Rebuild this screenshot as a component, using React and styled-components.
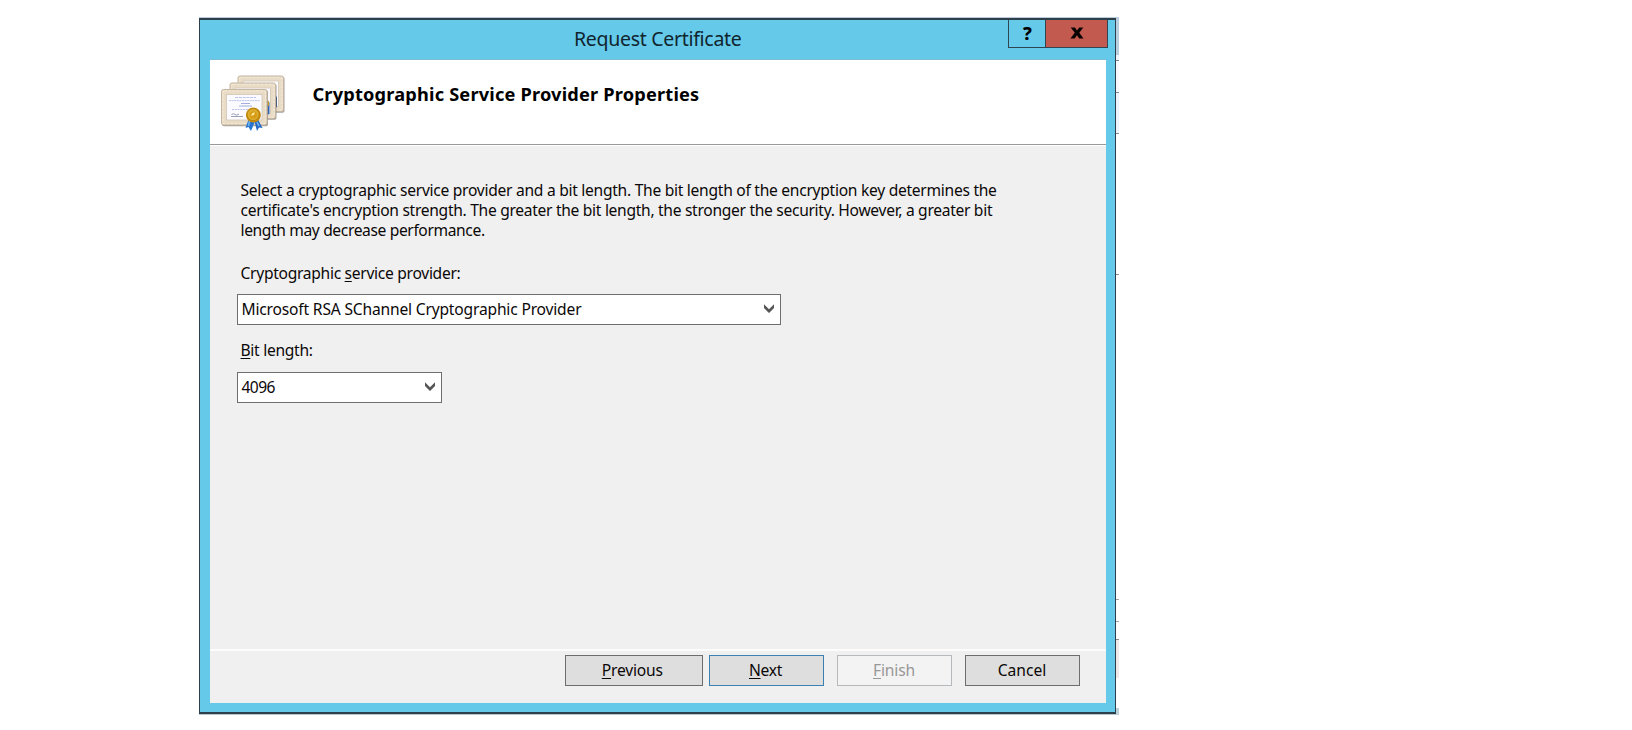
import React from "react";
import styled, { createGlobalStyle } from "styled-components";

const GlobalStyle = createGlobalStyle`
  * { box-sizing: border-box; }
  body { margin: 0; background: #fff; overflow: hidden; }
  button { font: inherit; }
`;

const Page = styled.main`
  display: flex;
  align-items: flex-start;
  height: 730px;
  padding: 18px 0 0 199px;
  background: #fff;
  font-family: "Noto Sans", "Open Sans", sans-serif;
  font-size: 15.6px;
  line-height: 20.3px;
  color: #0b0808;
`;

const Dialog = styled.section`
  display: flex;
  flex-direction: column;
  width: 917px;
  height: 696px;
  border: 1px solid #2d3f4a;
  border-top-width: 2px;
  border-bottom-width: 2px;
  background: #65caea;
  padding: 0 10px 9px 9.5px;
  box-shadow: 0 -1px 0 #b9cbdc, 0 1px 0 #b7c5cc;
`;

const TitleBar = styled.header`
  display: grid;
  grid-template-columns: 1fr auto 1fr;
  height: 39px;
  flex: none;
`;

const Title = styled.h1`
  grid-column: 2;
  margin: 0;
  padding: 2px 0 0 1px;
  font-size: 19.5px;
  font-weight: 400;
  line-height: 34px;
  letter-spacing: -0.3px;
  color: #10242d;
`;

const WindowControls = styled.div`
  grid-column: 3;
  justify-self: end;
  display: flex;
  height: 28px;
  margin-right: -3px;
`;

const ControlButton = styled.button`
  display: flex;
  align-items: center;
  justify-content: center;
  width: ${(p) => p.$width}px;
  margin-left: -1px;
  padding: 0 0 1px 1px;
  border: 1px solid #2f4652;
  border-top: 0;
  background: ${(p) => p.$fill};
  color: #000;
  font-size: 18px;
  font-weight: 800;
  line-height: 27px;
`;

const Client = styled.div`
  display: flex;
  flex-direction: column;
  flex: 1;
  background: #f0f0f0;
  margin-right: -1px;
`;

const Banner = styled.div`
  display: flex;
  height: 86px;
  padding: 14px 0 0 11px;
  gap: 27px;
  background: #fff;
  border-top: 1px solid #7cbdd6;
  border-bottom: 1px solid #999;
  box-shadow: 0 1px 0 #fff;
`;

const Heading = styled.h2`
  margin: 8px 0 0;
  font-size: 18.2px;
  font-weight: 700;
  line-height: 24px;
  letter-spacing: 0.19px;
  color: #000;
`;

const Form = styled.div`
  flex: 1;
  display: flex;
  flex-direction: column;
  align-items: flex-start;
  padding: 34.9px 0 0 27px;
`;

const Description = styled.p`
  margin: 0 0 22.6px 4px;
  line-height: 20.1px;
`;

const Line = styled.span`
  display: block;
  white-space: nowrap;
  letter-spacing: ${(p) => p.$tracking}px;
`;

const Label = styled.label`
  margin: ${(p) => p.$top || 0}px 0 0 4px;
  letter-spacing: -0.29px;
`;

const Key = styled.span`
  text-decoration: underline;
  text-decoration-thickness: 1px;
  text-underline-offset: 2px;
  text-decoration-skip-ink: none;
`;

const Select = styled.div`
  display: flex;
  align-items: center;
  justify-content: space-between;
  width: ${(p) => p.$width}px;
  height: 31px;
  margin-top: ${(p) => p.$top}px;
  padding: 0 5px 0 4px;
  border: 1px solid #6f6f6f;
  background: #fff;
  letter-spacing: ${(p) => p.$tracking}px;
`;

const Footer = styled.footer`
  display: flex;
  height: 54px;
  padding: 4px 26px 0 0;
  justify-content: flex-end;
  align-items: flex-start;
  border-top: 2px solid #fcfcfc;
`;

const Button = styled.button`
  width: ${(p) => p.$width}px;
  height: 31px;
  margin-left: ${(p) => p.$gap}px;
  padding: 0 ${(p) => p.$shift || 0}px 1px 0;
  border: 1px solid ${(p) => (p.disabled ? "#b5b9bc" : p.$primary ? "#3b80b3" : "#6d6d6d")};
  background: ${(p) => (p.disabled ? "#f3f3f3" : "#dedede")};
  color: ${(p) => (p.disabled ? "#989898" : "#0b0808")};
  letter-spacing: ${(p) => p.$tracking}px;
`;

/* Narrow strip of the window lying behind the dialog */
const BehindStrip = styled.div`
  display: flex;
  flex-direction: column;
  width: 3px;
  margin-top: -1px;
`;

const StripSegment = styled.div`
  height: ${(p) => p.$height}px;
  background: ${(p) => p.$fill || "#fff"};
  border-bottom: 1px solid ${(p) => p.$line || "#8d8d91"};
`;

const Chevron = () => (
  <svg width="12" height="12" viewBox="0 0 12 12" aria-hidden="true">
    <path d="M1 1.2 6 6.2 11 1.2V4.9L6 9.9 1 4.9Z" fill="#555" />
  </svg>
);

const CloseGlyph = () => (
  <svg width="14" height="12" viewBox="0 0 14 12" aria-hidden="true">
    <path d="M0.7 0.5H5L7 3.5 9.2.5H13.3L9.3 5.8 13.5 11.5H9.2L7 8.2 4.7 11.5H.4L4.8 5.8Z" fill="#080404" />
  </svg>
);

const Sheet = ({ x, y }) => (
  <g transform={`translate(${x} ${y})`}>
    <rect x="1" y="1.2" width="46" height="36" rx="2" fill="#756d63" opacity=".65" />
    <rect x=".5" y=".5" width="45.5" height="35.5" rx="2" fill="#e9dcc7" stroke="#c5b5a1" />
    <rect x="2" y="2" width="42.5" height="32.5" rx="1.5" fill="none" stroke="#f3e9d7" strokeWidth="1.2" strokeDasharray="2.5 1.5" />
    <rect x="5.5" y="5.5" width="35.5" height="25.5" fill="#fbfaff" stroke="#d2c5b4" strokeWidth=".8" />
  </g>
);

const CertificatesIcon = () => (
  <svg width="65" height="58" viewBox="0 0 65 58" aria-hidden="true">
    <Sheet x={16.5} y={1.5} />
    <path d="M54.5 24v10l1.5-1.5V22z" fill="#36548f" />
    <Sheet x={8.5} y={8.5} />
    <path d="M46.5 30v11l2-1.5V28z" fill="#2c62b1" />
    <path d="M46.5 27.5l1.5-1v5l-1.5 1z" fill="#c99a25" />
    <Sheet x={0} y={15} />
    <g stroke="#a9b7df" strokeWidth=".8">
      <path d="M14 23.5h21" strokeDasharray="3 .8" />
      <path d="M8 26.6h31" strokeDasharray="2 .6" />
      <path d="M20 29.5h9M18 32h13" stroke="#8c9cd6" />
      <path d="M11 35.5h18" strokeDasharray="2 .8" />
    </g>
    <path d="M10.5 40.5q2-1.5 3.5 0t4-.5M10 42.5h12" fill="none" stroke="#737b92" strokeWidth=".7" />
    <path d="M27.5 45.5 24.5 54l3-1 2.5 4 4-9.5z" fill="#2775d3" />
    <path d="M33.5 47.5 36 57l2-3.5 3.5.5-4.5-8.5z" fill="#2468c4" />
    <path d="M28.5 47 27.5 52M36 48l2 4" stroke="#75b9ef" strokeWidth="1.5" />
    <circle cx="32.4" cy="41" r="7.5" fill="#c68d0e" />
    <circle cx="32.1" cy="40.6" r="6" fill="#dcae2d" stroke="#b57b0a" strokeWidth=".8" />
    <circle cx="32.4" cy="40.9" r="3.6" fill="#d79b16" />
    <path d="M30.2 41.7q.5-3 3.8-3.1l-1.2 2.3z" fill="#fff0a6" />
  </svg>
);

export default function App() {
  return (
    <>
      <GlobalStyle />
      <Page>
        <Dialog>
          <TitleBar>
            <Title>Request Certificate</Title>
            <WindowControls>
              <ControlButton $width={38} $fill="#65caea">?</ControlButton>
              <ControlButton $width={63} $fill="#c35a50" aria-label="Close">
                <CloseGlyph />
              </ControlButton>
            </WindowControls>
          </TitleBar>
          <Client>
            <Banner>
              <CertificatesIcon />
              <Heading>Cryptographic Service Provider Properties</Heading>
            </Banner>
            <Form>
              <Description>
                <Line $tracking={-0.278}>Select a cryptographic service provider and a bit length. The bit length of the encryption key determines the</Line>
                <Line $tracking={-0.302}>certificate's encryption strength. The greater the bit length, the stronger the security. However, a greater bit</Line>
                <Line $tracking={-0.37}>length may decrease performance.</Line>
              </Description>
              <Label>Cryptographic <Key>s</Key>ervice provider:</Label>
              <Select $width={544.5} $top={10.8} $tracking={-0.18}>
                Microsoft RSA SChannel Cryptographic Provider
                <Chevron />
              </Select>
              <Label $top={15.4}>
                <Key>B</Key>it length:
              </Label>
              <Select $width={205} $top={11.2} $tracking={-0.6}>
                4096
                <Chevron />
              </Select>
            </Form>
            <Footer>
              <Button $width={137.5} $gap={0} $tracking={-0.2} $shift={3}><Key>P</Key>revious</Button>
              <Button $width={115} $gap={6.5} $tracking={-0.3} $shift={2} $primary><Key>N</Key>ext</Button>
              <Button $width={115} $gap={13} $tracking={-0.15} $shift={1} disabled><Key>F</Key>inish</Button>
              <Button $width={115} $gap={13} $tracking={0} $shift={1}>Cancel</Button>
            </Footer>
          </Client>
        </Dialog>
        <BehindStrip>
          <StripSegment $height={38} $fill="#b9cfe0" $line="#b9cfe0" />
          <StripSegment $height={6} $fill="#eef3fc" $line="#7c8794" />
          <StripSegment $height={32} $fill="#f6f8fd" $line="#858a94" />
          <StripSegment $height={41} $fill="#eef3fd" />
          <StripSegment $height={141} />
          <StripSegment $height={325} $line="#a4a4a4" />
          <StripSegment $height={22} $line="#a4a4a4" />
          <StripSegment $height={18} />
          <StripSegment $height={38} $fill="#f0e9ea" $line="#f0e9ea" />
          <StripSegment $height={31} $line="#c4cfd6" />
          <StripSegment $height={6} $fill="#bed0d8" $line="#bed0d8" />
        </BehindStrip>
      </Page>
    </>
  );
}
